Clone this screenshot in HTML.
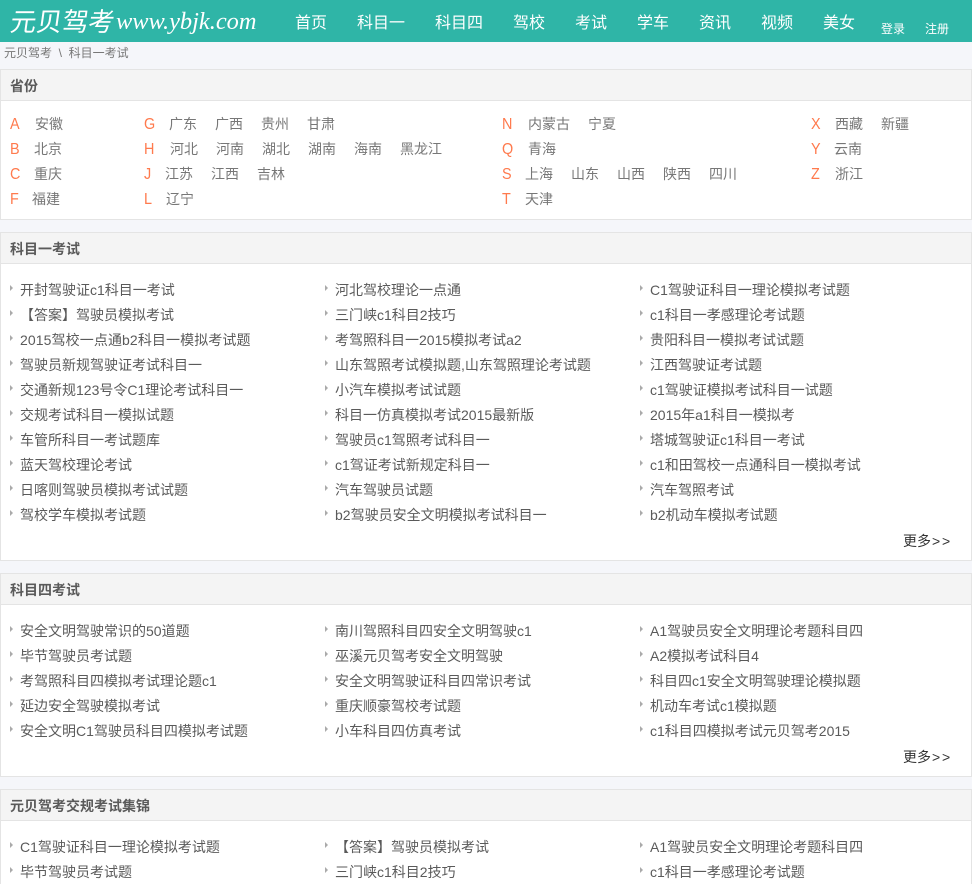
<!DOCTYPE html>
<html lang="zh-CN">
<head>
<meta charset="utf-8">
<title>科目一考试</title>
<style>
html,body{margin:0;padding:0;height:884px;overflow:hidden;}
body{width:972px;position:relative;background:#f5f6fa;font-family:"Liberation Sans","Noto Sans CJK SC",sans-serif;font-size:14px;color:#5a5a5a;}
a{color:inherit;text-decoration:none;}
.hd{position:absolute;left:0;top:0;width:972px;height:42px;background:#2fb5a7;}
.logo{position:absolute;left:8px;top:4px;font-size:26px;line-height:36px;color:#fff;white-space:nowrap;transform:skewX(-8deg);transform-origin:0 100%;}
.logo2{position:absolute;left:116px;top:4px;font-family:"Liberation Serif",serif;font-style:italic;font-size:24.4px;line-height:36px;color:#fff;white-space:nowrap;}
.n{position:absolute;top:11px;font-size:16px;line-height:25px;color:#fff;white-space:nowrap;}
.s{position:absolute;top:20px;font-size:12px;line-height:18px;color:#fff;white-space:nowrap;}
.crumb{position:absolute;left:4px;top:44px;font-size:12px;line-height:18px;color:#777;white-space:nowrap;}
.box{position:absolute;left:0;width:970px;background:#fff;border:1px solid #e4e4e4;}
.t{height:30px;line-height:32px;padding-left:9px;background:#f4f4f4;border-bottom:1px solid #e4e4e4;font-size:14px;font-weight:bold;color:#5a5a5a;}
.l{position:absolute;font-size:16px;line-height:25px;color:#ff7a4d;margin-top:1px;transform:scaleX(.9);transform-origin:0 50%;}
.p{position:absolute;line-height:25px;color:#777;white-space:nowrap;margin-top:1px;}
.i{position:absolute;line-height:25px;color:#5a5a5a;white-space:nowrap;margin-top:1px;}
.a{position:absolute;width:0;height:0;border-left:3px solid #aaa;border-top:3px solid transparent;border-bottom:3px solid transparent;}
.m{position:absolute;left:903px;font-size:14px;line-height:20px;color:#333;white-space:nowrap;}
.m span{letter-spacing:1.8px;margin-left:1px;}
</style>
</head>
<body>
<div class="hd">
<div class="logo">元贝驾考</div>
<div class="logo2">www.ybjk.com</div>
<a class="n" style="left:295px">首页</a>
<a class="n" style="left:357px">科目一</a>
<a class="n" style="left:435px">科目四</a>
<a class="n" style="left:513px">驾校</a>
<a class="n" style="left:575px">考试</a>
<a class="n" style="left:637px">学车</a>
<a class="n" style="left:699px">资讯</a>
<a class="n" style="left:761px">视频</a>
<a class="n" style="left:823px">美女</a>
<a class="s" style="left:881px">登录</a>
<a class="s" style="left:925px">注册</a>
</div>
<div class="crumb">元贝驾考 &nbsp;\&nbsp; 科目一考试</div>

<div class="box" style="top:69px;height:149px"><div class="t">省份</div></div>
<span class="l" style="left:10px;top:111px">A</span>
<span class="p" style="left:35px;top:111px">安徽</span>
<span class="l" style="left:10px;top:136px">B</span>
<span class="p" style="left:34px;top:136px">北京</span>
<span class="l" style="left:10px;top:161px">C</span>
<span class="p" style="left:34px;top:161px">重庆</span>
<span class="l" style="left:10px;top:186px">F</span>
<span class="p" style="left:32px;top:186px">福建</span>
<span class="l" style="left:144px;top:111px">G</span>
<span class="p" style="left:169px;top:111px">广东</span><span class="p" style="left:215px;top:111px">广西</span><span class="p" style="left:261px;top:111px">贵州</span><span class="p" style="left:307px;top:111px">甘肃</span>
<span class="l" style="left:144px;top:136px">H</span>
<span class="p" style="left:170px;top:136px">河北</span><span class="p" style="left:216px;top:136px">河南</span><span class="p" style="left:262px;top:136px">湖北</span><span class="p" style="left:308px;top:136px">湖南</span><span class="p" style="left:354px;top:136px">海南</span><span class="p" style="left:400px;top:136px">黑龙江</span>
<span class="l" style="left:144px;top:161px">J</span>
<span class="p" style="left:165px;top:161px">江苏</span><span class="p" style="left:211px;top:161px">江西</span><span class="p" style="left:257px;top:161px">吉林</span>
<span class="l" style="left:144px;top:186px">L</span>
<span class="p" style="left:166px;top:186px">辽宁</span>
<span class="l" style="left:502px;top:111px">N</span>
<span class="p" style="left:528px;top:111px">内蒙古</span><span class="p" style="left:588px;top:111px">宁夏</span>
<span class="l" style="left:502px;top:136px">Q</span>
<span class="p" style="left:528px;top:136px">青海</span>
<span class="l" style="left:502px;top:161px">S</span>
<span class="p" style="left:525px;top:161px">上海</span><span class="p" style="left:571px;top:161px">山东</span><span class="p" style="left:617px;top:161px">山西</span><span class="p" style="left:663px;top:161px">陕西</span><span class="p" style="left:709px;top:161px">四川</span>
<span class="l" style="left:502px;top:186px">T</span>
<span class="p" style="left:525px;top:186px">天津</span>
<span class="l" style="left:811px;top:111px">X</span>
<span class="p" style="left:835px;top:111px">西藏</span><span class="p" style="left:881px;top:111px">新疆</span>
<span class="l" style="left:811px;top:136px">Y</span>
<span class="p" style="left:834px;top:136px">云南</span>
<span class="l" style="left:811px;top:161px">Z</span>
<span class="p" style="left:835px;top:161px">浙江</span>

<div class="box" style="top:232px;height:327px"><div class="t">科目一考试</div></div>
<i class="a" style="left:10px;top:285px"></i><a class="i" style="left:20px;top:277px">开封驾驶证c1科目一考试</a>
<i class="a" style="left:325px;top:285px"></i><a class="i" style="left:335px;top:277px">河北驾校理论一点通</a>
<i class="a" style="left:640px;top:285px"></i><a class="i" style="left:650px;top:277px">C1驾驶证科目一理论模拟考试题</a>
<i class="a" style="left:10px;top:310px"></i><a class="i" style="left:20px;top:302px">【答案】驾驶员模拟考试</a>
<i class="a" style="left:325px;top:310px"></i><a class="i" style="left:335px;top:302px">三门峡c1科目2技巧</a>
<i class="a" style="left:640px;top:310px"></i><a class="i" style="left:650px;top:302px">c1科目一孝感理论考试题</a>
<i class="a" style="left:10px;top:335px"></i><a class="i" style="left:20px;top:327px;letter-spacing:.1px">2015驾校一点通b2科目一模拟考试题</a>
<i class="a" style="left:325px;top:335px"></i><a class="i" style="left:335px;top:327px">考驾照科目一2015模拟考试a2</a>
<i class="a" style="left:640px;top:335px"></i><a class="i" style="left:650px;top:327px">贵阳科目一模拟考试试题</a>
<i class="a" style="left:10px;top:360px"></i><a class="i" style="left:20px;top:352px">驾驶员新规驾驶证考试科目一</a>
<i class="a" style="left:325px;top:360px"></i><a class="i" style="left:335px;top:352px">山东驾照考试模拟题,山东驾照理论考试题</a>
<i class="a" style="left:640px;top:360px"></i><a class="i" style="left:650px;top:352px">江西驾驶证考试题</a>
<i class="a" style="left:10px;top:385px"></i><a class="i" style="left:20px;top:377px">交通新规123号令C1理论考试科目一</a>
<i class="a" style="left:325px;top:385px"></i><a class="i" style="left:335px;top:377px">小汽车模拟考试试题</a>
<i class="a" style="left:640px;top:385px"></i><a class="i" style="left:650px;top:377px">c1驾驶证模拟考试科目一试题</a>
<i class="a" style="left:10px;top:410px"></i><a class="i" style="left:20px;top:402px">交规考试科目一模拟试题</a>
<i class="a" style="left:325px;top:410px"></i><a class="i" style="left:335px;top:402px">科目一仿真模拟考试2015最新版</a>
<i class="a" style="left:640px;top:410px"></i><a class="i" style="left:650px;top:402px">2015年a1科目一模拟考</a>
<i class="a" style="left:10px;top:435px"></i><a class="i" style="left:20px;top:427px">车管所科目一考试题库</a>
<i class="a" style="left:325px;top:435px"></i><a class="i" style="left:335px;top:427px">驾驶员c1驾照考试科目一</a>
<i class="a" style="left:640px;top:435px"></i><a class="i" style="left:650px;top:427px">塔城驾驶证c1科目一考试</a>
<i class="a" style="left:10px;top:460px"></i><a class="i" style="left:20px;top:452px">蓝天驾校理论考试</a>
<i class="a" style="left:325px;top:460px"></i><a class="i" style="left:335px;top:452px">c1驾证考试新规定科目一</a>
<i class="a" style="left:640px;top:460px"></i><a class="i" style="left:650px;top:452px">c1和田驾校一点通科目一模拟考试</a>
<i class="a" style="left:10px;top:485px"></i><a class="i" style="left:20px;top:477px">日喀则驾驶员模拟考试试题</a>
<i class="a" style="left:325px;top:485px"></i><a class="i" style="left:335px;top:477px">汽车驾驶员试题</a>
<i class="a" style="left:640px;top:485px"></i><a class="i" style="left:650px;top:477px">汽车驾照考试</a>
<i class="a" style="left:10px;top:510px"></i><a class="i" style="left:20px;top:502px">驾校学车模拟考试题</a>
<i class="a" style="left:325px;top:510px"></i><a class="i" style="left:335px;top:502px">b2驾驶员安全文明模拟考试科目一</a>
<i class="a" style="left:640px;top:510px"></i><a class="i" style="left:650px;top:502px">b2机动车模拟考试题</a>
<a class="m" style="top:531px">更多<span>&gt;&gt;</span></a>

<div class="box" style="top:573px;height:202px"><div class="t">科目四考试</div></div>
<i class="a" style="left:10px;top:626px"></i><a class="i" style="left:20px;top:618px">安全文明驾驶常识的50道题</a>
<i class="a" style="left:325px;top:626px"></i><a class="i" style="left:335px;top:618px">南川驾照科目四安全文明驾驶c1</a>
<i class="a" style="left:640px;top:626px"></i><a class="i" style="left:650px;top:618px">A1驾驶员安全文明理论考题科目四</a>
<i class="a" style="left:10px;top:651px"></i><a class="i" style="left:20px;top:643px">毕节驾驶员考试题</a>
<i class="a" style="left:325px;top:651px"></i><a class="i" style="left:335px;top:643px">巫溪元贝驾考安全文明驾驶</a>
<i class="a" style="left:640px;top:651px"></i><a class="i" style="left:650px;top:643px">A2模拟考试科目4</a>
<i class="a" style="left:10px;top:676px"></i><a class="i" style="left:20px;top:668px">考驾照科目四模拟考试理论题c1</a>
<i class="a" style="left:325px;top:676px"></i><a class="i" style="left:335px;top:668px">安全文明驾驶证科目四常识考试</a>
<i class="a" style="left:640px;top:676px"></i><a class="i" style="left:650px;top:668px">科目四c1安全文明驾驶理论模拟题</a>
<i class="a" style="left:10px;top:701px"></i><a class="i" style="left:20px;top:693px">延边安全驾驶模拟考试</a>
<i class="a" style="left:325px;top:701px"></i><a class="i" style="left:335px;top:693px">重庆顺豪驾校考试题</a>
<i class="a" style="left:640px;top:701px"></i><a class="i" style="left:650px;top:693px">机动车考试c1模拟题</a>
<i class="a" style="left:10px;top:726px"></i><a class="i" style="left:20px;top:718px">安全文明C1驾驶员科目四模拟考试题</a>
<i class="a" style="left:325px;top:726px"></i><a class="i" style="left:335px;top:718px">小车科目四仿真考试</a>
<i class="a" style="left:640px;top:726px"></i><a class="i" style="left:650px;top:718px">c1科目四模拟考试元贝驾考2015</a>
<a class="m" style="top:747px">更多<span>&gt;&gt;</span></a>

<div class="box" style="top:789px;height:94px;border-bottom:0"><div class="t">元贝驾考交规考试集锦</div></div>
<i class="a" style="left:10px;top:842px"></i><a class="i" style="left:20px;top:834px">C1驾驶证科目一理论模拟考试题</a>
<i class="a" style="left:325px;top:842px"></i><a class="i" style="left:335px;top:834px">【答案】驾驶员模拟考试</a>
<i class="a" style="left:640px;top:842px"></i><a class="i" style="left:650px;top:834px">A1驾驶员安全文明理论考题科目四</a>
<i class="a" style="left:10px;top:867px"></i><a class="i" style="left:20px;top:859px">毕节驾驶员考试题</a>
<i class="a" style="left:325px;top:867px"></i><a class="i" style="left:335px;top:859px">三门峡c1科目2技巧</a>
<i class="a" style="left:640px;top:867px"></i><a class="i" style="left:650px;top:859px">c1科目一孝感理论考试题</a>
</body>
</html>
